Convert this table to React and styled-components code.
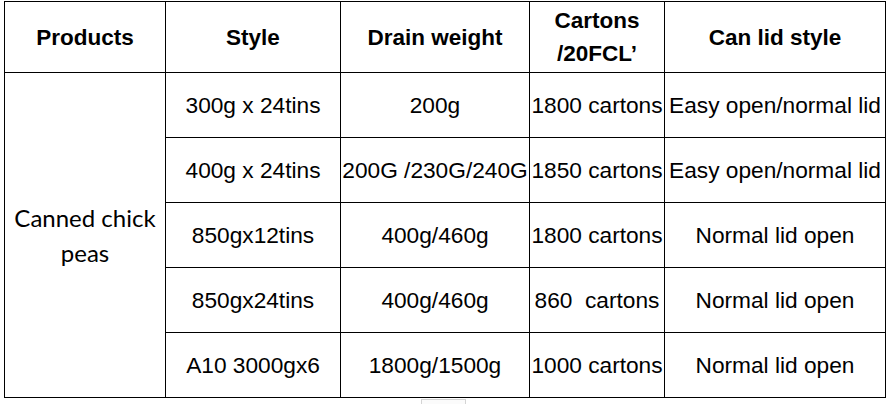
import React from "react";
import styled, { createGlobalStyle } from "styled-components";

const Global = createGlobalStyle`
  html, body { margin: 0; padding: 0; background: #fff; }
  body { font-family: "Liberation Sans", Arial, sans-serif; color: #000; }
`;

const Page = styled.div`
  padding: 1px 0 0 4px;
  width: 888px;
  height: 404px;
  box-sizing: border-box;
  overflow: hidden;
`;

const Table = styled.table`
  border-collapse: collapse;
  table-layout: fixed;
  width: 881px;
`;

const Head = styled.th`
  border: 1px solid #000;
  height: 70px;
  padding: 0;
  font-weight: bold;
  font-size: 22.5px;
  line-height: 33px;
  text-align: center;
  vertical-align: middle;
  white-space: nowrap;
`;

const Cell = styled.td`
  border: 1px solid #000;
  height: 64px;
  padding: 0;
  font-size: 22.7px;
  text-align: center;
  vertical-align: middle;
  white-space: pre;
  overflow: visible;
`;

const ProductCell = styled.td`
  border: 1px solid #000;
  padding: 0;
  font-family: Lato, "Open Sans", sans-serif;
  font-size: 24px;
  line-height: 35px;
  text-align: center;
  vertical-align: middle;
`;

const Handle = styled.div`
  margin: 1px 0 0 417px;
  width: 43px;
  height: 10px;
  border: 1px solid #d4d4d4;
  border-bottom: none;
  background: #fbfbfb;
`;

const cols = [161, 175, 189, 135, 221];

const rows = [
  ["300g x 24tins", "200g", "1800 cartons", "Easy open/normal lid"],
  ["400g x 24tins", "200G /230G/240G", "1850 cartons", "Easy open/normal lid"],
  ["850gx12tins", "400g/460g", "1800 cartons", "Normal lid open"],
  ["850gx24tins", "400g/460g", "860  cartons", "Normal lid open"],
  ["A10 3000gx6", "1800g/1500g", "1000 cartons", "Normal lid open"],
];

export default function App() {
  return (
    <Page>
      <Global />
      <Table>
        <colgroup>
          {cols.map((w, i) => (
            <col key={i} style={{ width: w }} />
          ))}
        </colgroup>
        <thead>
          <tr>
            <Head>Products</Head>
            <Head>Style</Head>
            <Head>Drain weight</Head>
            <Head>
              Cartons
              <br />
              /20FCL’
            </Head>
            <Head>Can lid style</Head>
          </tr>
        </thead>
        <tbody>
          {rows.map((r, i) => (
            <tr key={i}>
              {i === 0 && (
                <ProductCell rowSpan={5}>
                  Canned chick
                  <br />
                  peas
                </ProductCell>
              )}
              {r.map((c, j) => (
                <Cell key={j}>{c}</Cell>
              ))}
            </tr>
          ))}
        </tbody>
      </Table>
      <Handle />
    </Page>
  );
}
